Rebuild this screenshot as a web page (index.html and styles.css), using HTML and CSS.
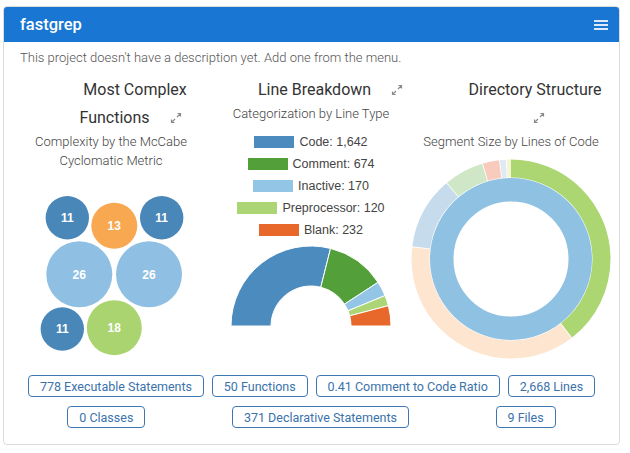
FILE: index.html
```html
<!DOCTYPE html>
<html>
<head>
<meta charset="utf-8">
<link rel="stylesheet" href="styles.css">
</head>
<body>
<div class="card">
  <div class="card-header">
    <span class="project-name">fastgrep</span>
    <svg class="menu-icon" width="14" height="10" viewBox="0 0 14 10"><rect x="0" y="0" width="14" height="2"/><rect x="0" y="4" width="14" height="2"/><rect x="0" y="8" width="14" height="2"/></svg>
  </div>
  <p class="description">This project doesn't have a description yet. Add one from the menu.</p>
  <div class="charts">
    <section class="chart">
      <h2 class="chart-title">Most Complex Functions <svg class="expand" width="12" height="12" viewBox="0 0 12 12"><path d="M7.5 1.5H10.5V4.5M10.5 1.5L7 5M4.5 10.5H1.5V7.5M1.5 10.5L5 7"/></svg></h2>
      <p class="chart-sub">Complexity by the McCabe Cyclomatic Metric</p>
      <svg class="bubbles" width="200" height="190" viewBox="0 0 200 190">
        <g class="b-dark"><circle cx="56.3" cy="47.7" r="21.7"/><circle cx="150.7" cy="47.7" r="21.7"/><circle cx="51.3" cy="159" r="21.7"/></g>
        <circle class="b-orange" cx="103.3" cy="55.7" r="23"/>
        <g class="b-light"><circle cx="68.3" cy="104.3" r="33"/><circle cx="138" cy="104.3" r="33"/></g>
        <circle class="b-green" cx="103.3" cy="157.7" r="27.5"/>
        <g class="b-label">
          <text x="56.3" y="52">11</text><text x="103.3" y="60">13</text><text x="150.7" y="52">11</text>
          <text x="68.3" y="108.6">26</text><text x="138" y="108.6">26</text>
          <text x="51.3" y="163.3">11</text><text x="103.3" y="162">18</text>
        </g>
      </svg>
    </section>
    <section class="chart">
      <h2 class="chart-title">Line Breakdown <svg class="expand" width="12" height="12" viewBox="0 0 12 12"><path d="M7.5 1.5H10.5V4.5M10.5 1.5L7 5M4.5 10.5H1.5V7.5M1.5 10.5L5 7"/></svg></h2>
      <p class="chart-sub">Categorization by Line Type</p>
      <ul class="legend">
        <li><span class="swatch c-code"></span>Code: 1,642</li>
        <li><span class="swatch c-comment"></span>Comment: 674</li>
        <li><span class="swatch c-inactive"></span>Inactive: 170</li>
        <li><span class="swatch c-prep"></span>Preprocessor: 120</li>
        <li><span class="swatch c-blank"></span>Blank: 232</li>
      </ul>
      <svg class="half-donut" width="160" height="80" viewBox="0 0 160 80">
        <path class="f-code" d="M0,80 A80,80 0 0 1 99.54,2.42 L89.77,41.21 A40,40 0 0 0 40,80 Z"/>
        <path class="f-comment" d="M99.54,2.42 A80,80 0 0 1 147.01,36.30 L113.50,58.15 A40,40 0 0 0 89.77,41.21 Z"/>
        <path class="f-inactive" d="M147.01,36.30 A80,80 0 0 1 154.0,49.61 L117.0,64.80 A40,40 0 0 0 113.50,58.15 Z"/>
        <path class="f-prep" d="M154.0,49.61 A80,80 0 0 1 157.38,59.67 L118.69,69.84 A40,40 0 0 0 117.0,64.80 Z"/>
        <path class="f-blank" d="M157.38,59.67 A80,80 0 0 1 160,80 L120,80 A40,40 0 0 0 118.69,69.84 Z"/>
      </svg>
    </section>
    <section class="chart">
      <h2 class="chart-title">Directory Structure <svg class="expand" width="12" height="12" viewBox="0 0 12 12"><path d="M7.5 1.5H10.5V4.5M10.5 1.5L7 5M4.5 10.5H1.5V7.5M1.5 10.5L5 7"/></svg></h2>
      <p class="chart-sub">Segment Size by Lines of Code</p>
      <svg class="sunburst" width="200" height="200" viewBox="0 0 200 200">
        <g transform="rotate(-90 100 100)" fill="none" stroke-width="18">
          <circle cx="100" cy="100" r="90.5" stroke="#acd672" stroke-dasharray="224.1 600" stroke-dashoffset="0"/>
          <circle cx="100" cy="100" r="90.5" stroke="#fde5cf" stroke-dasharray="211.8 600" stroke-dashoffset="-224.9"/>
          <circle cx="100" cy="100" r="90.5" stroke="#c6dbec" stroke-dasharray="66.3 600" stroke-dashoffset="-437.5"/>
          <circle cx="100" cy="100" r="90.5" stroke="#d0e7c7" stroke-dasharray="36.3 600" stroke-dashoffset="-504.6"/>
          <circle cx="100" cy="100" r="90.5" stroke="#f8cbbd" stroke-dasharray="15 600" stroke-dashoffset="-541.7"/>
          <circle cx="100" cy="100" r="90.5" stroke="#dfeaf5" stroke-dasharray="5.5 600" stroke-dashoffset="-557.5"/>
          <circle cx="100" cy="100" r="90.5" stroke="#f4f5d2" stroke-dasharray="4 600" stroke-dashoffset="-563.8"/>
        </g>
        <circle cx="100" cy="100" r="69.25" fill="none" stroke="#8fc1e3" stroke-width="23.5"/>
      </svg>
    </section>
  </div>
  <div class="stats">
    <span class="stat">778 Executable Statements</span>
    <span class="stat">50 Functions</span>
    <span class="stat">0.41 Comment to Code Ratio</span>
    <span class="stat">2,668 Lines</span>
    <span class="stat">0 Classes</span>
    <span class="stat">371 Declarative Statements</span>
    <span class="stat">9 Files</span>
  </div>
</div>
</body>
</html>
```
FILE: styles.css
```css
html, body {
  margin: 0;
  padding: 0;
  background: #fff;
}
body {
  font-family: Roboto, "Liberation Sans", sans-serif;
  color: #333;
}
.card {
  margin: 6px 10px 0 3px;
  border: 1px solid #dcdcdc;
  border-radius: 4px;
  overflow: hidden;
  padding-bottom: 16px;
}
.card-header {
  background: #1976d2;
  height: 35px;
  display: flex;
  align-items: center;
  justify-content: space-between;
  padding: 0 11px 0 16px;
}
.project-name {
  color: #fff;
  font-size: 16.5px;
  font-weight: 500;
}
.menu-icon {
  fill: #dbe9f8;
  display: block;
}
.description {
  margin: 0;
  padding: 6px 16px 0;
  line-height: 20px;
  font-size: 13px;
  font-weight: 300;
  color: #555;
}
.charts {
  display: grid;
  grid-template-columns: repeat(3, 200px);
  padding: 0 8px 0 7px;
  margin-top: 8px;
  align-items: start;
}
.chart {
  display: flex;
  flex-direction: column;
  align-items: center;
}
.chart-title {
  align-self: stretch;
  margin: 0 -4px 0 44px;
  font-size: 16px;
  font-weight: 400;
  line-height: 28px;
  text-align: center;
  color: #333;
}
.expand {
  display: inline-block;
  vertical-align: middle;
  margin: -2px 9px 0 16px;
  fill: none;
  stroke: #8a8a8a;
  stroke-width: 1.2;
}
.chart-sub {
  margin: 0;
  font-size: 13px;
  font-weight: 300;
  line-height: 19px;
  color: #444;
  text-align: center;
}
.bubbles {
  display: block;
  align-self: flex-start;
}
.b-dark { fill: #4a87b9; }
.b-orange { fill: #f8a850; }
.b-light { fill: #8fc0e3; }
.b-green { fill: #a9d46f; }
.b-label text {
  fill: #fff;
  font-family: "Liberation Sans", Arial, sans-serif;
  font-weight: 700;
  font-size: 12px;
  text-anchor: middle;
}
.legend {
  list-style: none;
  margin: 8px 0 0;
  padding: 0;
  display: flex;
  flex-direction: column;
  align-items: center;
}
.legend li {
  height: 22px;
  display: flex;
  align-items: center;
  font-family: "Liberation Sans", Arial, sans-serif;
  font-size: 12.5px;
  color: #444;
}
.swatch {
  width: 40px;
  height: 12px;
  margin-right: 5px;
}
.c-code { background: #4b8bbe; }
.c-comment { background: #539f3a; }
.c-inactive { background: #92c5e6; }
.c-prep { background: #acd676; }
.c-blank { background: #e7682a; }
.half-donut {
  display: block;
  margin-top: 5px;
}
.half-donut path { stroke: #fff; stroke-width: 1; }
.f-code { fill: #4b8bbe; }
.f-comment { fill: #539f3a; }
.f-inactive { fill: #92c5e6; }
.f-prep { fill: #acd676; }
.f-blank { fill: #e7682a; }
.sunburst {
  display: block;
  margin-top: 8px;
}
.stats {
  display: flex;
  flex-wrap: wrap;
  justify-content: space-around;
  row-gap: 9px;
  margin: 15px 20px 0;
}
.stat {
  height: 22px;
  box-sizing: border-box;
  border: 1px solid #3d78b4;
  border-radius: 4px;
  padding: 0 11px;
  display: flex;
  align-items: center;
  font-size: 12.5px;
  color: #3a72ab;
}
```
